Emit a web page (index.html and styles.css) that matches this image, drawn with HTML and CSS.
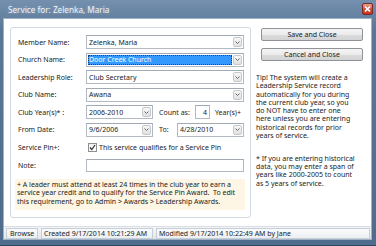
FILE: index.html
```html
<!DOCTYPE html>
<html lang="en">
<head>
  <meta charset="UTF-8" />
  <title>Service for: Zelenka, Maria</title>
  <link rel="stylesheet" href="styles.css">
</head>
<body>
  <div class="window">
    <div class="titlebar">
      <span class="title">Service for: Zelenka, Maria</span>
      <span class="close">
        <svg width="7" height="6" viewBox="0 0 7 6"><path d="M1 0.5 L6 5.5 M6 0.5 L1 5.5" stroke="#fff" stroke-width="1.6" /></svg>
      </span>
    </div>

    <div class="client">
      <div class="main">
        <div class="group">
          <div class="row">
            <span class="lbl">Member Name:</span>
            <div class="combo"><span class="value">Zelenka, Maria</span><span class="drop"><svg width="5" height="3" viewBox="0 0 5 3"><path d="M0.5 0.5 L2.5 2.5 L4.5 0.5" fill="none" stroke="#666" /></svg></span></div>
          </div>
          <div class="row">
            <span class="lbl">Church Name:</span>
            <div class="combo"><span class="value selected">Door Creek Church</span><span class="drop"><svg width="5" height="3" viewBox="0 0 5 3"><path d="M0.5 0.5 L2.5 2.5 L4.5 0.5" fill="none" stroke="#666" /></svg></span></div>
          </div>
          <div class="row">
            <span class="lbl">Leadership Role:</span>
            <div class="combo"><span class="value">Club Secretary</span><span class="drop"><svg width="5" height="3" viewBox="0 0 5 3"><path d="M0.5 0.5 L2.5 2.5 L4.5 0.5" fill="none" stroke="#666" /></svg></span></div>
          </div>
          <div class="row">
            <span class="lbl">Club Name:</span>
            <div class="combo"><span class="value">Awana</span><span class="drop"><svg width="5" height="3" viewBox="0 0 5 3"><path d="M0.5 0.5 L2.5 2.5 L4.5 0.5" fill="none" stroke="#666" /></svg></span></div>
          </div>
          <div class="row">
            <span class="lbl">Club Year(s)* :</span>
            <div class="combo short"><span class="value">2006-2010</span><span class="drop"><svg width="5" height="3" viewBox="0 0 5 3"><path d="M0.5 0.5 L2.5 2.5 L4.5 0.5" fill="none" stroke="#666" /></svg></span></div>
            <span class="lbl-count">Count as:</span>
            <span class="count">4</span>
            <span class="years">Year(s)+</span>
          </div>
          <div class="row">
            <span class="lbl">From Date:</span>
            <div class="combo short"><span class="value">9/6/2006</span><span class="drop"><svg width="5" height="3" viewBox="0 0 5 3"><path d="M0.5 0.5 L2.5 2.5 L4.5 0.5" fill="none" stroke="#666" /></svg></span></div>
            <span class="lbl-to">To:</span>
            <div class="combo"><span class="value">4/28/2010</span><span class="drop"><svg width="5" height="3" viewBox="0 0 5 3"><path d="M0.5 0.5 L2.5 2.5 L4.5 0.5" fill="none" stroke="#666" /></svg></span></div>
          </div>
          <div class="row">
            <span class="lbl">Service Pin+:</span>
            <span class="checkbox">
              <svg width="7" height="7" viewBox="0 0 7 7"><path d="M1 3.5 L2.8 5.5 L6 1" fill="none" stroke="#333" stroke-width="1.2" /></svg>
            </span>
            <span class="check-text">This service qualifies for a Service Pin</span>
          </div>
          <div class="row">
            <span class="lbl">Note:</span>
            <span class="textbox"></span>
          </div>

          <div class="note">
            + A leader must attend at least 24 times in the club year to earn a<br>
            service year credit and to qualify for the Service Pin Award.&nbsp; To edit<br>
            this requirement, go to Admin &gt; Awards &gt; Leadership Awards.
          </div>
        </div>

        <div class="side">
          <button class="btn">Save and Close</button>
          <button class="btn">Cancel and Close</button>
          <p class="tip">
            Tip! The system will create a<br>
            Leadership Service record<br>
            automatically for you during<br>
            the current club year, so you<br>
            do NOT have to enter one<br>
            here unless you are entering<br>
            historical records for prior<br>
            years of service.
          </p>
          <p class="tip">
            * If you are entering historical<br>
            data, you may enter a span of<br>
            years like 2000-2005 to count<br>
            as 5 years of service.
          </p>
        </div>
      </div>

      <div class="statusbar">
        <span class="panel browse">Browse</span>
        <span class="panel created">Created 9/17/2014 10:21:29 AM</span>
        <span class="panel modified">Modified 9/17/2014 10:22:49 AM by Jane</span>
      </div>
    </div>
  </div>
</body>
</html>
```

FILE: styles.css
```css
* {
  box-sizing: border-box;
}

body {
  margin: 0;
  font-family: "Noto Sans", "Open Sans", sans-serif;
  font-size: 7px;
  color: #222;
  background: #4e6b8c;
}

.window {
  width: 376px;
  height: 246px;
  display: flex;
  flex-direction: column;
  padding: 0 4px 5px 3px;
  background: linear-gradient(#7590ae, #5a7797 30px, #4f6c8d);
  border-bottom: 1px solid #2f4862;
}

.titlebar {
  height: 18px;
  display: flex;
  align-items: center;
  justify-content: space-between;
  padding-left: 5px;
  margin-right: -1px;
}

.title {
  font-size: 8.2px;
  color: #eef2f7;
  text-shadow: 0 0 3px rgba(255,255,255,0.35);
}

.close {
  width: 11px;
  height: 12px;
  display: flex;
  align-items: center;
  justify-content: center;
  border: 1px solid #7a2a22;
  border-radius: 2px;
  background: linear-gradient(#e9a394, #d5513e 50%, #c8301d);
}

.client {
  flex: 1;
  display: flex;
  flex-direction: column;
  background: #fff;
  border: 1px solid #9fb2c6;
}

.main {
  flex: 1;
  display: flex;
  padding: 8px 0 0 6px;
}

.group {
  width: 241px;
  height: 191px;
  display: flex;
  flex-direction: column;
  gap: 3.6px;
  padding: 7px 6px 0 7px;
  border: 1px solid #d3dae1;
  border-radius: 3px;
}

.row {
  height: 14px;
  display: flex;
  align-items: center;
}

.lbl {
  width: 68px;
  flex: none;
}

.combo {
  flex: 1;
  height: 14px;
  display: flex;
  align-items: stretch;
  padding: 1px;
  border: 1px solid #b3b9c2;
  border-top-color: #a3a9b2;
  background: #fff;
}

.combo.short {
  flex: none;
  width: 67px;
}

.value {
  flex: 1;
  display: flex;
  align-items: center;
  padding-left: 1px;
  white-space: nowrap;
  overflow: hidden;
}

.value.selected {
  background: #3399ff;
  color: #fff;
  outline: 1px dotted #1d3f66;
  outline-offset: -1px;
  margin-right: 1px;
}

.drop {
  width: 9px;
  flex: none;
  display: flex;
  align-items: center;
  justify-content: center;
  border: 1px solid #c5c9ce;
  border-radius: 2px;
  background: linear-gradient(#f7f7f7, #dfe1e3);
}

.lbl-count {
  width: 36px;
  margin-left: 6px;
}

.count {
  width: 15px;
  height: 14px;
  padding-right: 2px;
  display: flex;
  align-items: center;
  justify-content: flex-end;
  border: 1px solid #b3b9c2;
  border-top-color: #a3a9b2;
}

.years {
  margin-left: 5px;
}

.lbl-to {
  width: 18px;
  margin-left: 6px;
}

.checkbox {
  width: 9px;
  height: 9px;
  margin-left: 2px;
  display: flex;
  align-items: center;
  justify-content: center;
  border: 1px solid #8e8f8f;
  background: linear-gradient(#f0f0f0, #fdfdfd);
}

.check-text {
  margin-left: 2px;
}

.textbox {
  flex: 1;
  height: 13px;
  border: 1px solid #b3b9c2;
  border-top-color: #a3a9b2;
}

.note {
  margin: 3px -1px 0 -3px;
  padding: 2px 2px 2px 2px;
  height: 31px;
  line-height: 8.5px;
  background: #fdf6e4;
  white-space: nowrap;
}

.side {
  width: 108px;
  margin-left: 5px;
  padding-top: 1px;
  display: flex;
  flex-direction: column;
}

.btn {
  width: 102px;
  height: 13px;
  margin: 0 0 7px 5px;
  padding: 0;
  font-family: inherit;
  font-size: 7px;
  color: #222;
  border: 1px solid #8f9399;
  border-radius: 2px;
  background: linear-gradient(#f4f4f4, #ebebeb 50%, #dcdcdc 51%, #d2d3d4);
}

.tip {
  margin: 6px 0 8.3px;
  line-height: 8.3px;
  white-space: nowrap;
}

.statusbar {
  height: 13px;
  display: flex;
  align-items: center;
  gap: 3px;
  padding: 0 1px 0 2px;
  background: linear-gradient(#f3f5f7, #e2e6eb);
  border-top: 1px solid #d9dee4;
}

.panel {
  height: 11px;
  display: flex;
  align-items: center;
  padding-left: 2px;
  border: 1px solid #c8ced6;
  background: linear-gradient(#f9fafb, #eceff2);
  white-space: nowrap;
}

.browse {
  width: 32px;
  padding-left: 3px;
}

.created {
  width: 112px;
}

.modified {
  flex: 1;
}
```
